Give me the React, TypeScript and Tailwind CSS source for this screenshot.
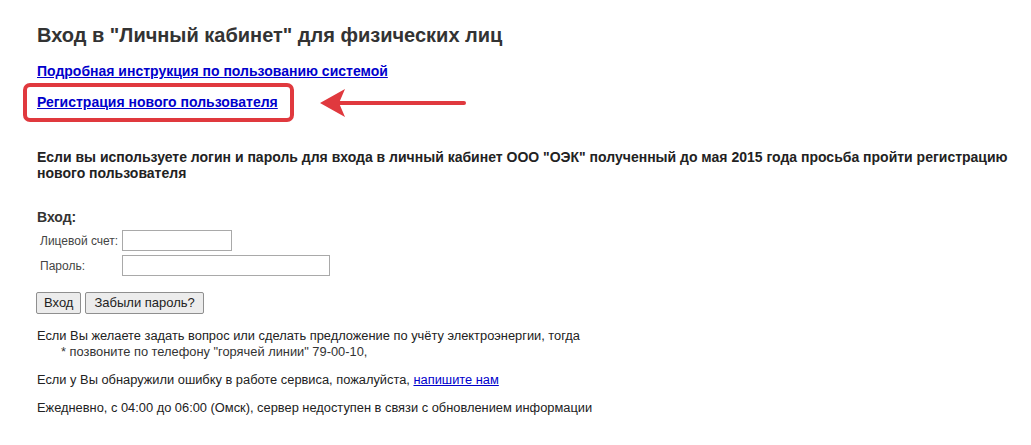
export default function App() {
  return (
    <div className="min-h-[445px] w-[1031px] bg-white pl-[37px] pt-[22px] font-['Liberation_Sans',Arial,sans-serif] text-[#222]">
      <h1 className="text-[20px] leading-[26px] font-bold text-[#333]">
        Вход в "Личный кабинет" для физических лиц
      </h1>

      <div className="mt-[15px] text-[14px] leading-[16px] font-bold">
        <a href="#" className="text-[#0000cc] underline">
          Подробная инструкция по пользованию системой
        </a>
      </div>

      <div className="mt-[4px] flex items-center">
        <div className="-ml-[14px] rounded-[7px] border-4 border-[#e0393e] py-[7px] pl-[10px] pr-[12px] text-[14px] leading-[17px] font-bold">
          <a href="#" className="text-[#0000cc] underline">
            Регистрация нового пользователя
          </a>
        </div>
        <svg className="ml-[24px]" width="150" height="32" viewBox="0 0 150 32">
          <line x1="18" y1="16" x2="146" y2="16" stroke="#e0393e" strokeWidth="4" strokeLinecap="round" />
          <polygon points="2,16 27,2 21,16 27,30" fill="#e0393e" />
        </svg>
      </div>

      <p className="mt-[27px] w-[985px] text-[14px] leading-[16px] font-bold text-[#222]">
        Если вы используете логин и пароль для входа в личный кабинет ООО "ОЭК" полученный до мая 2015 года просьба пройти регистрацию нового пользователя
      </p>

      <div className="mt-[28px] text-[14px] leading-[16px] font-bold text-[#333]">Вход:</div>
      <div className="mt-[5px] grid grid-cols-[82px_auto] gap-y-[4px] pl-[3px] text-[12px] text-[#444]">
        <label className="flex h-[21px] items-center">Лицевой счет:</label>
        <input className="h-[21px] w-[110px] border border-[#a9a9a9] bg-white" />
        <label className="flex h-[21px] items-center">Пароль:</label>
        <input type="password" className="h-[21px] w-[208px] border border-[#a9a9a9] bg-white" />
      </div>

      <div className="mt-[16px] -ml-px flex gap-[4px] text-[13px] text-[#222]">
        <button className="h-[22px] rounded-[2px] border border-[#8f8f8f] bg-[#ececec] px-[7px]">Вход</button>
        <button className="h-[22px] rounded-[2px] border border-[#8f8f8f] bg-[#ececec] px-[8px]">Забыли пароль?</button>
      </div>

      <div className="mt-[14px] text-[12.85px] leading-[16px] text-[#222]">
        <p>Если Вы желаете задать вопрос или сделать предложение по учёту электроэнергии, тогда</p>
        <p className="pl-[24px] text-[#333]">* позвоните по телефону "горячей линии" 79-00-10,</p>
        <p className="mt-[12px]">
          Если у Вы обнаружили ошибку в работе сервиса, пожалуйста,{" "}
          <a href="#" className="text-[#0000cc] underline">напишите нам</a>
        </p>
        <p className="mt-[12px]">Ежедневно, с 04:00 до 06:00 (Омск), сервер недоступен в связи с обновлением информации</p>
      </div>
    </div>
  );
}
